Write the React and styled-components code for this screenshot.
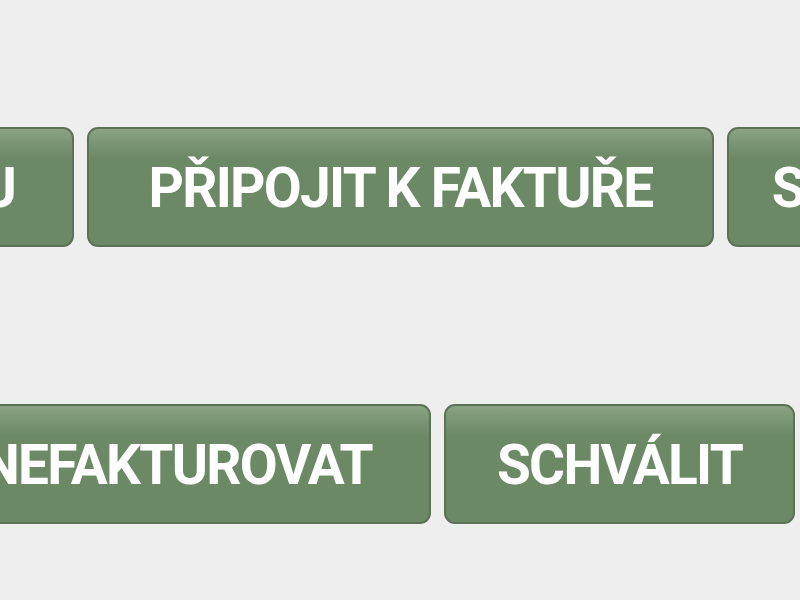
import React from "react";
import styled, { createGlobalStyle } from "styled-components";

const Global = createGlobalStyle`
  html, body { margin: 0; padding: 0; background: #eeeeee; overflow: hidden; }
  body { width: 800px; height: 600px; }
`;

const Page = styled.div`
  display: flex;
  flex-direction: column;
  gap: 157px;
  padding-top: 127px;
  width: 800px;
  height: 600px;
  overflow: hidden;
  box-sizing: border-box;
`;

const Row = styled.div`
  display: flex;
  gap: 13px;
  margin-left: ${(p) => p.$offset}px;
`;

const Button = styled.button`
  flex: 0 0 auto;
  box-sizing: border-box;
  width: ${(p) => p.$width}px;
  height: 120px;
  display: flex;
  align-items: center;
  justify-content: ${(p) => (p.$align === "end" ? "flex-end" : "center")};
  padding: 2px 57px 0;
  border: 2px solid #5c7257;
  border-radius: 11px;
  background: linear-gradient(to bottom, #8ba584 0px, #7a9573 14px, #6c8966 30px, #6c8966 100%);
  color: #ffffff;
  font-family: Roboto, "Liberation Sans", sans-serif;
  font-weight: 700;
  font-size: 55px;
  letter-spacing: -1.7px;
  white-space: nowrap;
  overflow: hidden;
  cursor: pointer;
`;

export default function App() {
  return (
    <>
      <Global />
      <Page>
        <Row $offset={-86}>
          <Button $width={160} $align="end">U</Button>
          <Button $width={627}>PŘIPOJIT K FAKTUŘE</Button>
          <Button $width={300} $align="start">SMAZAT</Button>
        </Row>
        <Row $offset={-52}>
          <Button $width={483} $align="end">NEFAKTUROVAT</Button>
          <Button $width={351}>SCHVÁLIT</Button>
        </Row>
      </Page>
    </>
  );
}
